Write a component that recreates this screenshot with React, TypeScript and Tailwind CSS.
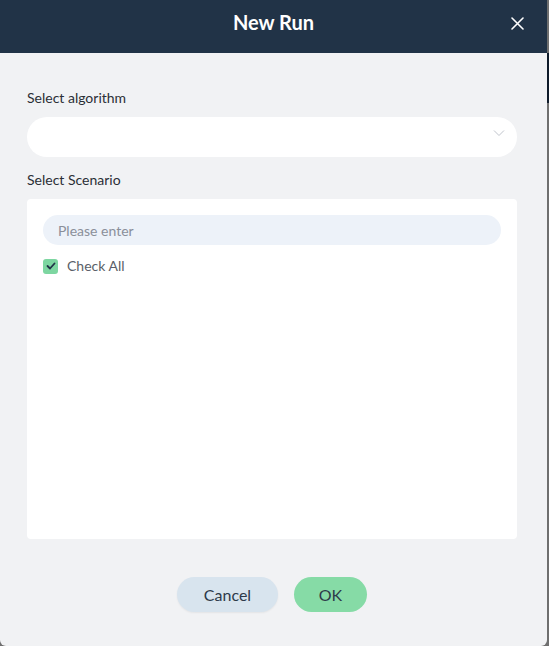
import React from "react";

export default function App() {
  return (
    <div className="w-[549px] h-[646px] flex bg-[#6f6f6f] overflow-hidden" style={{ fontFamily: "Lato, 'Noto Sans', sans-serif" }}>
      <div className="w-[547px] h-[646px] flex flex-col bg-[#f1f2f4] rounded-b-[6px] overflow-hidden shrink-0">
        <div className="h-[53px] bg-[#213347] flex items-center justify-center relative shrink-0 pb-[9px]">
          <span className="text-white text-[20px] font-bold leading-[24px]">New Run</span>
          <svg className="absolute left-[511px] top-[17px]" width="13" height="13" viewBox="0 0 13 13">
            <path d="M1 1L12 12M12 1L1 12" stroke="white" strokeWidth="1.6" strokeLinecap="round" />
          </svg>
        </div>
        <div className="flex flex-col pl-[27px] pr-[30px] pt-[37px]">
          <div className="text-[14px] text-[#2b2f36] leading-[16px]">Select algorithm</div>
          <div className="mt-[11px] h-[40px] bg-white rounded-full flex items-start justify-end pr-[12px] pt-[12px]">
            <svg width="12" height="8" viewBox="0 0 12 8">
              <path d="M1 1.5L6 6.5L11 1.5" stroke="#c0c4cc" strokeWidth="1" fill="none" />
            </svg>
          </div>
          <div className="mt-[15px] text-[14px] text-[#2b2f36] leading-[16px]">Select Scenario</div>
          <div className="mt-[11px] h-[340px] bg-white rounded-[4px] px-[16px] pt-[16px]">
            <div className="h-[30px] bg-[#edf2f9] rounded-full flex items-center pl-[15px] text-[14px] text-[#8a8f99]">
              Please enter
            </div>
            <div className="mt-[11px] flex items-center gap-[9px] h-[20px]">
              <div className="w-[15px] h-[15px] rounded-[3px] bg-[#7dd6a1] flex items-center justify-center">
                <svg width="10" height="8" viewBox="0 0 10 8">
                  <path d="M1.5 4L4 6.5L8.5 1.5" stroke="#213347" strokeWidth="1.8" fill="none" strokeLinecap="round" strokeLinejoin="round" />
                </svg>
              </div>
              <span className="text-[14px] text-[#5a5f68] leading-[20px]">Check All</span>
            </div>
          </div>
          <div className="mt-[38px] flex justify-center gap-[16px]">
            <button className="w-[101px] h-[35px] rounded-full bg-[#d8e4ee] text-[16px] text-[#2d3a4a] shadow-[0_1px_2px_rgba(0,0,0,0.06)]">Cancel</button>
            <button className="w-[73px] h-[35px] rounded-full bg-[#86dba6] text-[16px] text-[#2d3a4a]">OK</button>
          </div>
        </div>
      </div>
      <div className="flex-1 flex flex-col">
        <div className="h-[53px]"></div>
        <div className="h-[50px] bg-[#0f1b2a]"></div>
      </div>
    </div>
  );
}
